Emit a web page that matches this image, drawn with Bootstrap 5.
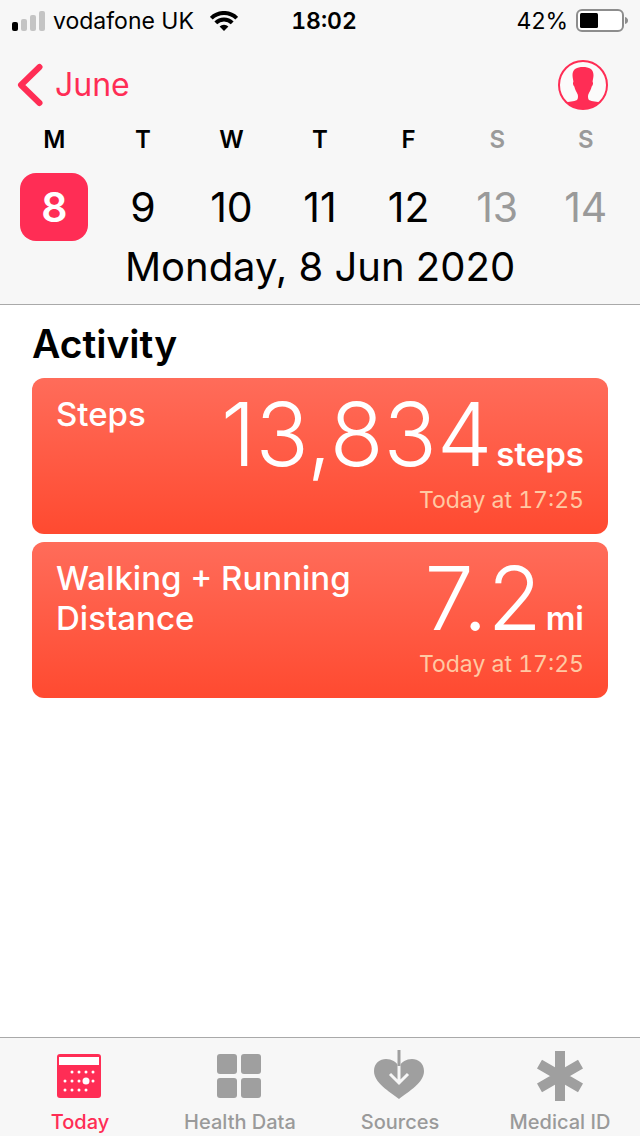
<!DOCTYPE html>
<html lang="en">
<head>
<meta charset="utf-8">
<meta name="viewport" content="width=device-width, initial-scale=1">
<title>Health – Today</title>
<link href="https://cdn.jsdelivr.net/npm/bootstrap@5.3.0/dist/css/bootstrap.min.css" rel="stylesheet">
<style>
  :root { --health-pink: #ff2d55; --health-grey: #9a9a9a; --bar-bg: #f7f7f7; --bar-line: #a9a9a9; }
  body { font-family: Inter, Roboto, sans-serif; color: #000; background: #fff; }
  svg { display: block; flex: none; }
  .bar-top { background: var(--bar-bg); border-bottom: 1px solid var(--bar-line); padding-bottom: 11px; }
  .status-row { height: 42px; padding: 0 12px; font-size: 23px; line-height: 42px; white-space: nowrap; }
  .status-side { flex: 1 1 0; }
  .status-time, .metric-time { font-variant-numeric: tabular-nums; }
  .nav-row { height: 85px; padding: 0 32px 0 16px; }
  .back-link { color: var(--health-pink); font-size: 32px; line-height: 40px; gap: 12px; }
  .week-row { padding: 0 10px; }
  .weekday { font-size: 24px; line-height: 26px; font-weight: 600; margin-bottom: 20px; }
  .day-btn { width: 68px; height: 68px; border: 0; border-radius: 16px; background: none; color: inherit; font-size: 41px; line-height: 68px; padding: 0; }
  .day-btn.chosen { background: var(--health-pink); color: #fff; font-weight: 600; }
  .weekend { color: var(--health-grey); }
  .date-title { font-size: 40px; line-height: 52px; font-weight: 400; }
  .page-main { padding: 15px 32px 32px; }
  .section-title { font-size: 39px; line-height: 48px; font-weight: 600; margin-bottom: 10px; }
  .metric { min-height: 156px; padding: 16px 24px 8px; border: 0; border-radius: 12px; color: #fff; background: linear-gradient(#ff6c5a, #ff4a30); }
  .metric-name { font-size: 33px; line-height: 40px; font-weight: 500; }
  .metric-value { font-size: 88px; line-height: 80px; font-weight: 300; }
  .metric-unit { font-size: 33px; line-height: 40px; font-weight: 600; }
  .metric-time { font-size: 23px; line-height: 32px; margin-top: 10px; color: #ffc9a3; }
  .bar-bottom { background: var(--bar-bg); border-top: 1px solid var(--bar-line); padding-top: 12px; }
  .tab-link { color: var(--health-grey); font-size: 20px; line-height: 28px; font-weight: 500; gap: 6px; }
  .tab-link.active { color: var(--health-pink); }
</style>
</head>
<body>
<div class="d-flex flex-column min-vh-100">
  <header class="bar-top">
    <div class="status-row d-flex align-items-center">
      <div class="status-side d-flex align-items-center">
        <svg width="33" height="20" viewBox="0 0 33 20" aria-hidden="true">
          <rect x="0" y="11" width="6" height="9" rx="2" fill="#000"/>
          <g fill="#c4c4c4"><rect x="9" y="8" width="6" height="12" rx="2"/><rect x="18" y="4" width="6" height="16" rx="2"/><rect x="27" y="0" width="6" height="20" rx="2"/></g>
        </svg>
        <span class="ms-2">vodafone UK</span>
        <svg class="ms-3" width="28" height="20" viewBox="0 0 28 20" aria-hidden="true">
          <g fill="none" stroke="#000" stroke-width="4"><path d="M1.300 7.200a18 18 0 0 1 25.400 0"/><path d="M5.800 11.800a11.600 11.600 0 0 1 16.400 0"/></g>
          <path d="M14 20l-4.400-4.500a6.200 6.200 0 0 1 8.800 0z"/>
        </svg>
      </div>
      <div class="status-time fw-semibold ms-2">18:02</div>
      <div class="status-side d-flex align-items-center justify-content-end">
        <span>42%</span>
        <svg class="ms-2" width="52" height="24" viewBox="0 0 52 24" aria-hidden="true">
          <rect x="1" y="1" width="46" height="21" rx="5" fill="#fff" stroke="#8d8d8d" stroke-width="2"/>
          <rect x="4" y="4" width="18" height="15" rx="1.500"/><path d="M49 8q3 1 3 3.500t-3 3.500z" fill="#8d8d8d"/>
        </svg>
      </div>
    </div>
    <div class="nav-row d-flex align-items-center justify-content-between">
      <a href="#" class="back-link d-flex align-items-center text-decoration-none">
        <svg width="27" height="44" viewBox="0 0 27 44" aria-hidden="true"><path d="M23.500 4L5 22l18.500 18" fill="none" stroke="#ff2d55" stroke-width="6" stroke-linecap="round" stroke-linejoin="round"/></svg>
        June
      </a>
      <button type="button" class="btn p-0 border-0" aria-label="Profile">
        <svg width="50" height="50" viewBox="0 0 50 50">
          <defs><clipPath id="ring"><circle cx="25" cy="25" r="24"/></clipPath></defs>
          <circle cx="25" cy="25" r="24" fill="#fbfbfb" stroke="#ff2d55" stroke-width="2"/>
          <path clip-path="url(#ring)" fill="#ff2d55" d="M25 7c6 0 10.500 2 10.500 8 0 3-.8 4.500-.9 7 .8.600.5 3.500-.9 4.600C33 30 31.500 32 30.300 34.500c-.5 1.500-.4 4.500.7 5.500 3 1.700 8 1.200 12.500 3V50h-37v-7c4.500-1.800 9.500-1.300 12.500-3 1.100-1 1.200-4 .7-5.500C18.500 32 17 30 16.300 26.600c-1.400-1.100-1.700-4-.9-4.600-.1-2.500-.9-4-.9-7C14.500 9 19 7 25 7z"/>
        </svg>
      </button>
    </div>
    <div class="week-row row g-0 text-center flex-nowrap">
      <div class="col"><div class="weekday">M</div><button type="button" class="day-btn chosen">8</button></div>
      <div class="col"><div class="weekday">T</div><button type="button" class="day-btn">9</button></div>
      <div class="col"><div class="weekday">W</div><button type="button" class="day-btn">10</button></div>
      <div class="col"><div class="weekday">T</div><button type="button" class="day-btn">11</button></div>
      <div class="col"><div class="weekday">F</div><button type="button" class="day-btn">12</button></div>
      <div class="col weekend"><div class="weekday">S</div><button type="button" class="day-btn">13</button></div>
      <div class="col weekend"><div class="weekday">S</div><button type="button" class="day-btn">14</button></div>
    </div>
    <h1 class="date-title text-center m-0">Monday, 8 Jun 2020</h1>
  </header>

  <main class="page-main flex-grow-1">
    <h2 class="section-title">Activity</h2>
    <div class="d-flex flex-column gap-2">
      <article class="metric card flex-row justify-content-between">
        <div class="metric-name">Steps</div>
        <div class="text-end text-nowrap">
          <div class="d-flex align-items-baseline justify-content-end gap-1"><span class="metric-value">13,834</span><span class="metric-unit">steps</span></div>
          <div class="metric-time">Today at 17:25</div>
        </div>
      </article>
      <article class="metric card flex-row justify-content-between">
        <div class="metric-name">Walking + Running Distance</div>
        <div class="text-end text-nowrap">
          <div class="d-flex align-items-baseline justify-content-end gap-1"><span class="metric-value">7.2</span><span class="metric-unit">mi</span></div>
          <div class="metric-time">Today at 17:25</div>
        </div>
      </article>
    </div>
  </main>

  <nav class="bar-bottom row g-0 sticky-bottom" aria-label="Sections">
    <a href="#" class="tab-link active col d-flex flex-column align-items-center text-decoration-none" aria-current="page">
      <svg width="52" height="52" viewBox="0 0 52 52" aria-hidden="true">
        <rect x="3" y="4" width="44" height="44" rx="3" fill="#ff2d55"/><rect x="5" y="7" width="40" height="8" fill="#fff"/>
        <g fill="#fff"><circle cx="18" cy="22" r="1.500"/><circle cx="25" cy="22" r="1.500"/><circle cx="32" cy="22" r="1.500"/><circle cx="39" cy="22" r="1.500"/>
        <circle cx="11" cy="31" r="1.500"/><circle cx="18" cy="31" r="1.500"/><circle cx="25" cy="31" r="1.500"/><circle cx="32" cy="31" r="3.500"/><circle cx="39" cy="31" r="1.500"/>
        <circle cx="11" cy="40" r="1.500"/><circle cx="18" cy="40" r="1.500"/><circle cx="25" cy="40" r="1.500"/><circle cx="32" cy="40" r="1.500"/></g>
      </svg>
      Today
    </a>
    <a href="#" class="tab-link col d-flex flex-column align-items-center text-decoration-none">
      <svg width="52" height="52" viewBox="0 0 52 52" fill="#9f9f9f" aria-hidden="true"><rect x="3" y="4" width="20" height="20" rx="3"/><rect x="27" y="4" width="20" height="20" rx="3"/><rect x="3" y="28" width="20" height="20" rx="3"/><rect x="27" y="28" width="20" height="20" rx="3"/></svg>
      Health Data
    </a>
    <a href="#" class="tab-link col d-flex flex-column align-items-center text-decoration-none">
      <svg width="52" height="52" viewBox="0 0 52 52" aria-hidden="true">
        <path fill="#9f9f9f" d="M25 49C15 41 0 33 0 21 0 13 6 9 12 9c6 0 10 3 13 7 3-4 7-7 13-7 6 0 12 4 12 12 0 12-15 20-25 28z"/>
        <path d="M25 14v19M16 24l9 9 9-9" fill="none" stroke="#f7f7f7" stroke-width="3"/>
        <path d="M25 0v16" stroke="#9f9f9f" stroke-width="3"/>
      </svg>
      Sources
    </a>
    <a href="#" class="tab-link col d-flex flex-column align-items-center text-decoration-none">
      <svg width="52" height="52" viewBox="0 0 52 52" aria-hidden="true"><path d="M26 1v50M5.500 14.200l41 23.600M46.500 14.200l-41 23.600" stroke="#9f9f9f" stroke-width="10"/></svg>
      Medical ID
    </a>
  </nav>
</div>
<script src="https://cdn.jsdelivr.net/npm/bootstrap@5.3.0/dist/js/bootstrap.bundle.min.js"></script>
</body>
</html>
